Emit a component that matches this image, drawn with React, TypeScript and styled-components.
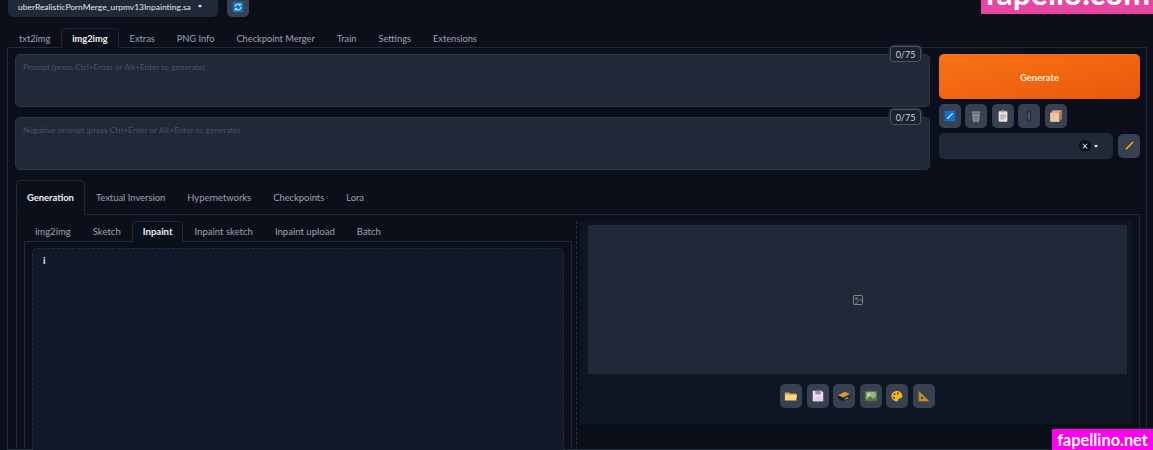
import * as React from 'react'
import styled, { createGlobalStyle } from 'styled-components'
import { Image as ImageIcon } from 'lucide-react'

const Global = createGlobalStyle`
  html, body { margin: 0; padding: 0; background: #0b0f19; }
  * { box-sizing: border-box; }
`

const Page = styled.div`
  position: relative;
  width: 1153px;
  height: 450px;
  overflow: hidden;
  background: #0b0f19;
  color: #9ca3af;
  font-family: 'Lato', 'Noto Sans', sans-serif;
  font-size: 9.4px;
`

const TopBar = styled.div`
  display: flex;
  gap: 9px;
  height: 17px;
  padding-left: 8px;
`

const ModelSelect = styled.div`
  display: flex;
  align-items: center;
  gap: 7px;
  width: 210px;
  height: 17px;
  padding: 0 0 4px 10px;
  background: #1f2937;
  border-radius: 0 0 5px 5px;
  color: #e5e7eb;
  font-size: 8.45px;
  white-space: nowrap;
`

const Caret = styled.span`
  width: 0;
  height: 0;
  border-left: 2.5px solid transparent;
  border-right: 2.5px solid transparent;
  border-top: 3px solid #e5e7eb;
`

const IconBtn = styled.div<{ $h?: number }>`
  display: flex;
  align-items: center;
  justify-content: center;
  width: 22px;
  height: ${p => p.$h ?? 24}px;
  background: #374151;
  border-radius: 5px;
  flex: none;
`

const TopBtn = styled(IconBtn)`
  border-radius: 0 0 5px 5px;
  padding-bottom: 4px;
`

const TabRow = styled.div<{ $h: number; $size?: number }>`
  display: flex;
  height: ${p => p.$h}px;
  font-size: ${p => p.$size ?? 9.4}px;
  margin-bottom: -1px;
  position: relative;
  z-index: 1;
`

const Tab = styled.div<{ $active?: boolean }>`
  display: flex;
  align-items: center;
  padding: 0 10px;
  border: 1px solid ${p => (p.$active ? '#1f2937' : 'transparent')};
  border-bottom-color: ${p => (p.$active ? '#0b0f19' : 'transparent')};
  border-radius: 5px 5px 0 0;
  color: ${p => (p.$active ? '#eef0f3' : '#9ca3af')};
  font-weight: ${p => (p.$active ? 700 : 400)};
  white-space: nowrap;
`

const MainTabs = styled(TabRow)`
  margin-top: 11px;
  padding-left: 8px;
  & > div {
    padding-top: 1px;
  }
`

const SubTabs = styled(TabRow)`
  & > div {
    padding-bottom: 1px;
  }
`

const MainPanel = styled.div`
  height: 403px;
  margin: 0 6px 0 7px;
  padding: 6px 6px 0 7px;
  border: 1px solid #1f2937;
`

const PromptRow = styled.div`
  display: flex;
  gap: 9px;
`

const Prompts = styled.div`
  display: flex;
  flex-direction: column;
  gap: 10px;
  flex: 1;
`

const PromptBox = styled.div`
  position: relative;
  height: 53px;
  padding: 7px;
  background: #1f2937;
  border: 1px solid #2b3544;
  border-radius: 5px;
  color: #4b5563;
  font-size: 8.3px;
`

const Counter = styled.div`
  position: absolute;
  top: -9px;
  right: 8px;
  width: 31px;
  height: 16px;
  display: flex;
  align-items: center;
  justify-content: center;
  background: #1a2230;
  border: 1px solid #4b5563;
  border-radius: 4px;
  box-shadow: 0 0 0 1.5px #232c39;
  color: #d1d5db;
  font-size: 9px;
`

const Actions = styled.div`
  display: flex;
  flex-direction: column;
  width: 201px;
`

const GenerateBtn = styled.div`
  display: flex;
  align-items: center;
  justify-content: center;
  height: 45px;
  padding-top: 1px;
  background: linear-gradient(to bottom right, #f97316, #ea580c);
  border-radius: 5px;
  color: #ffedd5;
  font-weight: 700;
  font-size: 9.5px;
`

const ToolRow = styled.div`
  display: flex;
  gap: 4.4px;
  margin-top: 5px;
`

const StyleRow = styled.div`
  display: flex;
  align-items: center;
  justify-content: space-between;
  margin-top: 5px;
`

const StyleSelect = styled.div`
  display: flex;
  align-items: center;
  justify-content: flex-end;
  gap: 3px;
  width: 174px;
  height: 26px;
  padding-right: 15px;
  background: #1f2937;
  border-radius: 5px;
`

const ClearDot = styled.div`
  width: 12px;
  height: 12px;
  border-radius: 50%;
  background: #0b0f19;
  color: #e5e7eb;
  font-size: 11px;
  line-height: 12px;
  text-align: center;
`

const GenSection = styled.div`
  margin-left: 1px;
`

const GenTabs = styled(TabRow)`
  margin-top: 10px;
`

const GenPanel = styled.div`
  display: flex;
  height: 236px;
  padding: 6px 7px 0 7px;
  border: 1px solid #1f2937;
  border-bottom: 0;
`

const LeftCol = styled.div`
  display: flex;
  flex-direction: column;
  width: 548px;
  flex: none;
`

const SubPanel = styled.div`
  flex: 1;
  padding: 6px 7px 0;
  border: 1px solid #1f2937;
  border-bottom: 0;
`

const Canvas = styled.div`
  height: 100%;
  padding: 5px 10px;
  background: #111827;
  border: 1px dashed #232d3b;
  border-bottom: 0;
  border-radius: 5px 5px 0 0;
  color: #e5e7eb;
  font-weight: 700;
  font-size: 10px;
`

const Divider = styled.div`
  width: 8px;
  flex: none;
  display: flex;
  justify-content: center;
  &::before {
    content: '';
    border-left: 1px dashed #28303d;
  }
`

const RightCol = styled.div`
  flex: 1;
  align-self: flex-start;
  height: 203px;
  background: #0f1623;
  padding: 4px 5px 0 8px;
  display: flex;
  flex-direction: column;
`

const ImageArea = styled.div`
  display: flex;
  align-items: center;
  justify-content: center;
  height: 149px;
  background: #1f2937;
  color: #9ca3af;
`

const ImageTools = styled.div`
  display: flex;
  justify-content: center;
  gap: 4.6px;
  padding-top: 10px;
`

const WatermarkTop = styled.div`
  position: absolute;
  top: 0;
  right: 0;
  width: 172px;
  height: 14px;
  overflow: hidden;
  background: #e846a4;
  color: #fff;
  font-family: 'Lato', sans-serif;
  font-weight: 700;
  font-size: 32px;
  line-height: 14px;
  padding-left: 4px;
  white-space: nowrap;
  & > span {
    display: block;
    margin-top: -14px;
  }
`

const WatermarkBottom = styled.div`
  position: absolute;
  right: 0;
  bottom: 0;
  width: 101px;
  height: 21px;
  display: flex;
  align-items: center;
  justify-content: center;
  background: #ff00f0;
  color: #fff;
  font-family: 'Lato', sans-serif;
  font-weight: 700;
  font-size: 16.3px;
`

const Svg = (p: { children: React.ReactNode }) => (
  <svg width="14" height="14" viewBox="0 0 16 16">{p.children}</svg>
)

const RefreshIcon = () => (
  <svg width="12" height="12" viewBox="0 0 16 16">
    <rect x="1" y="1" width="14" height="14" rx="1" fill="#1273c4" />
    <path d="M4 8a4 4 0 0 1 7-2.600M12 8a4 4 0 0 1-7 2.600" fill="none" stroke="#cfeeff" strokeWidth="1.500" />
    <path d="M11.800 3v3h-3M4.200 13v-3h3" fill="none" stroke="#cfeeff" strokeWidth="1" />
  </svg>
)

const CheckIcon = () => (
  <Svg>
    <rect x="2" y="2" width="12" height="12" rx="1" fill="#1272d0" />
    <path d="M5 11l6-6" stroke="#fff" strokeWidth="1.300" />
  </Svg>
)

const TrashIcon = () => (
  <Svg>
    <path d="M3 3.500h10" stroke="#9ca3af" strokeWidth="1.400" />
    <path d="M3.500 5h9l-1 9.500h-7z" fill="#8b929c" />
    <path d="M5 7l5.500 5.500M11 7l-5.500 5.500M8 6v8M4.500 9.500h7" stroke="#5d6570" strokeWidth=".6" />
  </Svg>
)

const ClipboardIcon = () => (
  <Svg>
    <rect x="3" y="2.500" width="10" height="12" rx="1" fill="#e5e3d8" />
    <rect x="6" y="1.500" width="4" height="2.400" fill="#a8a69b" />
    <path d="M5 7h6M5 9h6M5 11h4" stroke="#7d7f82" strokeWidth=".8" />
  </Svg>
)

const ClipIcon = () => (
  <Svg>
    <path d="M6 4a2 2 0 0 1 4 0v8a2 2 0 0 1-4 0z" fill="none" stroke="#1f2530" strokeWidth="1.100" />
    <path d="M8 4v7" stroke="#6b7280" strokeWidth="1" />
  </Svg>
)

const BoxIcon = () => (
  <Svg>
    <path d="M1.500 4.500l3-3h10v9.500l-3 3.500h-10z" fill="#d9a57e" />
    <path d="M1.500 4.500h10v10h-10z" fill="#eec6a6" />
    <path d="M11.500 4.500l3-3v9.500l-3 3.500z" fill="#a87a58" />
  </Svg>
)

const PencilIcon = () => (
  <Svg>
    <path d="M2 14l.5-3.500L12 1l3 3-9.500 9.500z" fill="#3a3128" />
    <path d="M3.500 11L12 2.500l1.500 1.500L5 12.500z" fill="#dca42f" />
  </Svg>
)

const FolderIcon = () => (
  <Svg>
    <path d="M1 4h5l1 1h7v2H1z" fill="#d9a94a" />
    <path d="M1 13V6.500h14L14 13z" fill="#f9d77e" />
  </Svg>
)

const FloppyIcon = () => (
  <Svg>
    <path d="M2 2h10l2 2v10H2z" fill="#e8dff0" />
    <rect x="5" y="2" width="6" height="4" fill="#8f8aa0" />
    <rect x="4" y="9" width="8" height="5" fill="#f5c6ee" />
  </Svg>
)

const BookIcon = () => (
  <Svg>
    <path d="M1 7l8-4 6 3-8 4z" fill="#d99a2b" />
    <path d="M1 7l6 3v4L1 11z" fill="#1d1d1f" />
    <path d="M7 10l8-4v4l-8 4z" fill="#26262a" />
    <path d="M9 11.500l4-2" stroke="#eee" strokeWidth=".9" />
  </Svg>
)

const PictureIcon = () => (
  <Svg>
    <rect x="1" y="2" width="14" height="12" fill="#5c6f3a" />
    <rect x="2.500" y="3.500" width="11" height="9" fill="#9ab48a" />
    <path d="M2.500 12.500L7 8l3 3 3.500-2v3.500z" fill="#4d7a3d" />
    <rect x="4" y="5" width="3" height="3" fill="#c9d6c3" />
  </Svg>
)

const PaletteIcon = () => (
  <Svg>
    <path d="M8 2a6.500 6 0 1 0 0 12c2 0 1-2 2-3s4 .5 4-3a6 6 0 0 0-6-6z" fill="#f4b81f" />
    <circle cx="5" cy="6" r="1.200" fill="#7a3b12" />
    <circle cx="9" cy="5" r="1.200" fill="#a3321c" />
    <circle cx="4.500" cy="10" r="1.200" fill="#2c3e50" />
  </Svg>
)

const RulerIcon = () => (
  <Svg>
    <path d="M2 2l12 12H2z" fill="#c29526" stroke="#8a6a18" strokeWidth=".5" />
    <path d="M4.500 8l3.500 3.500H4.500z" fill="#3a3f4a" />
  </Svg>
)

const mainTabs = ['txt2img', 'img2img', 'Extras', 'PNG Info', 'Checkpoint Merger', 'Train', 'Settings', 'Extensions']
const genTabs = ['Generation', 'Textual Inversion', 'Hypernetworks', 'Checkpoints', 'Lora']
const subTabs = ['img2img', 'Sketch', 'Inpaint', 'Inpaint sketch', 'Inpaint upload', 'Batch']

export default function App() {
  return (
    <Page>
      <Global />
      <TopBar>
        <ModelSelect>
          uberRealisticPornMerge_urpmv13Inpainting.sa
          <Caret />
        </ModelSelect>
        <TopBtn $h={17}>
          <RefreshIcon />
        </TopBtn>
      </TopBar>

      <MainTabs $h={20} $size={9.25}>
        {mainTabs.map(t => (
          <Tab key={t} $active={t === 'img2img'}>{t}</Tab>
        ))}
      </MainTabs>

      <MainPanel>
        <PromptRow>
          <Prompts>
            <PromptBox>
              Prompt (press Ctrl+Enter or Alt+Enter to generate)
              <Counter>0/75</Counter>
            </PromptBox>
            <PromptBox>
              Negative prompt (press Ctrl+Enter or Alt+Enter to generate)
              <Counter>0/75</Counter>
            </PromptBox>
          </Prompts>
          <Actions>
            <GenerateBtn>Generate</GenerateBtn>
            <ToolRow>
              <IconBtn><CheckIcon /></IconBtn>
              <IconBtn><TrashIcon /></IconBtn>
              <IconBtn><ClipboardIcon /></IconBtn>
              <IconBtn><ClipIcon /></IconBtn>
              <IconBtn><BoxIcon /></IconBtn>
            </ToolRow>
            <StyleRow>
              <StyleSelect>
                <ClearDot>×</ClearDot>
                <Caret />
              </StyleSelect>
              <IconBtn><PencilIcon /></IconBtn>
            </StyleRow>
          </Actions>
        </PromptRow>

        <GenSection>
          <GenTabs $h={35}>
            {genTabs.map(t => (
              <Tab key={t} $active={t === 'Generation'}>{t}</Tab>
            ))}
          </GenTabs>

          <GenPanel>
            <LeftCol>
              <SubTabs $h={21} $size={9.55}>
                {subTabs.map(t => (
                  <Tab key={t} $active={t === 'Inpaint'}>{t}</Tab>
                ))}
              </SubTabs>
              <SubPanel>
                <Canvas>i</Canvas>
              </SubPanel>
            </LeftCol>
            <Divider />
            <RightCol>
              <ImageArea>
                <ImageIcon size={12} strokeWidth={1.5} />
              </ImageArea>
              <ImageTools>
                <IconBtn><FolderIcon /></IconBtn>
                <IconBtn><FloppyIcon /></IconBtn>
                <IconBtn><BookIcon /></IconBtn>
                <IconBtn><PictureIcon /></IconBtn>
                <IconBtn><PaletteIcon /></IconBtn>
                <IconBtn><RulerIcon /></IconBtn>
              </ImageTools>
            </RightCol>
          </GenPanel>
        </GenSection>
      </MainPanel>

      <WatermarkTop><span>fapello.com</span></WatermarkTop>
      <WatermarkBottom>fapellino.net</WatermarkBottom>
    </Page>
  )
}
